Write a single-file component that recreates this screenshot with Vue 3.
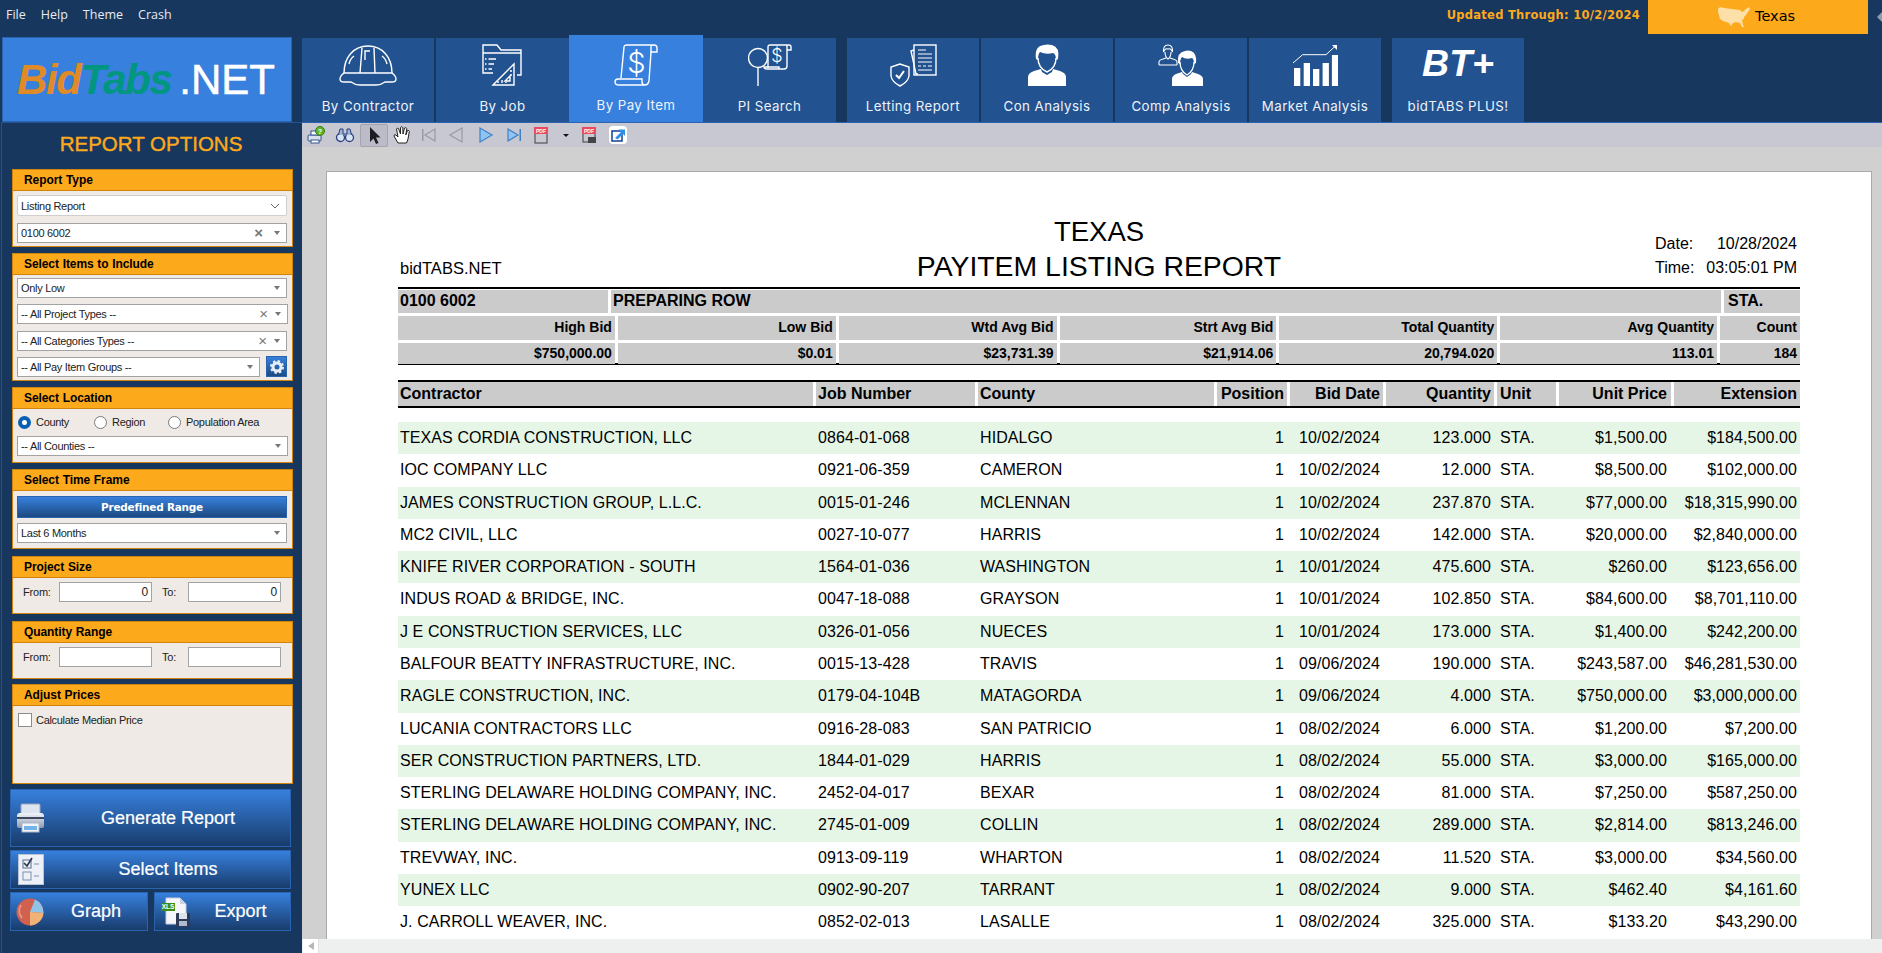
<script setup>
const tabsA = [
  { k: 'hat', label: 'By Contractor', w: 132 },
  { k: 'job', label: 'By Job', w: 133 },
  { k: 'pay', label: 'By Pay Item', w: 134, active: true },
  { k: 'pi', label: 'PI Search', w: 133 },
]
const tabsB = [
  { k: 'let', label: 'Letting Report', w: 132 },
  { k: 'con', label: 'Con Analysis', w: 132 },
  { k: 'comp', label: 'Comp Analysis', w: 132 },
  { k: 'mkt', label: 'Market Analysis', w: 132 },
]
const tools = [
  ['pq', 28], ['bin', 30], ['arrow', 28], ['hand', 28], ['first', 26], ['prev', 28],
  ['next', 32], ['last', 24], ['pdf', 30], ['drop', 20], ['mail', 26], ['exp', 32],
].map(([k, w]) => ({ k, w }))
const stats = [
  ['High Bid', '$750,000.00', 217], ['Low Bid', '$0.01', 218], ['Wtd Avg Bid', '$23,731.39', 218],
  ['Strt Avg Bid', '$21,914.06', 217], ['Total Quantity', '20,794.020', 218], ['Avg Quantity', '113.01', 217], ['Count', '184', 80],
]
const rows = [
  ['TEXAS CORDIA CONSTRUCTION, LLC', '0864-01-068', 'HIDALGO', '10/02/2024', '123.000', '$1,500.00', '$184,500.00'],
  ['IOC COMPANY LLC', '0921-06-359', 'CAMERON', '10/02/2024', '12.000', '$8,500.00', '$102,000.00'],
  ['JAMES CONSTRUCTION GROUP, L.L.C.', '0015-01-246', 'MCLENNAN', '10/02/2024', '237.870', '$77,000.00', '$18,315,990.00'],
  ['MC2 CIVIL, LLC', '0027-10-077', 'HARRIS', '10/02/2024', '142.000', '$20,000.00', '$2,840,000.00'],
  ['KNIFE RIVER CORPORATION - SOUTH', '1564-01-036', 'WASHINGTON', '10/01/2024', '475.600', '$260.00', '$123,656.00'],
  ['INDUS ROAD & BRIDGE, INC.', '0047-18-088', 'GRAYSON', '10/01/2024', '102.850', '$84,600.00', '$8,701,110.00'],
  ['J E CONSTRUCTION SERVICES, LLC', '0326-01-056', 'NUECES', '10/01/2024', '173.000', '$1,400.00', '$242,200.00'],
  ['BALFOUR BEATTY INFRASTRUCTURE, INC.', '0015-13-428', 'TRAVIS', '09/06/2024', '190.000', '$243,587.00', '$46,281,530.00'],
  ['RAGLE CONSTRUCTION, INC.', '0179-04-104B', 'MATAGORDA', '09/06/2024', '4.000', '$750,000.00', '$3,000,000.00'],
  ['LUCANIA CONTRACTORS LLC', '0916-28-083', 'SAN PATRICIO', '08/02/2024', '6.000', '$1,200.00', '$7,200.00'],
  ['SER CONSTRUCTION PARTNERS, LTD.', '1844-01-029', 'HARRIS', '08/02/2024', '55.000', '$3,000.00', '$165,000.00'],
  ['STERLING DELAWARE HOLDING COMPANY, INC.', '2452-04-017', 'BEXAR', '08/02/2024', '81.000', '$7,250.00', '$587,250.00'],
  ['STERLING DELAWARE HOLDING COMPANY, INC.', '2745-01-009', 'COLLIN', '08/02/2024', '289.000', '$2,814.00', '$813,246.00'],
  ['TREVWAY, INC.', '0913-09-119', 'WHARTON', '08/02/2024', '11.520', '$3,000.00', '$34,560.00'],
  ['YUNEX LLC', '0902-90-207', 'TARRANT', '08/02/2024', '9.000', '$462.40', '$4,161.60'],
  ['J. CARROLL WEAVER, INC.', '0852-02-013', 'LASALLE', '08/02/2024', '325.000', '$133.20', '$43,290.00'],
]
</script>

<template>
  <div class="app">
    <header class="topbar">
      <nav class="menu"><span>File</span><span>Help</span><span>Theme</span><span>Crash</span></nav>
      <div class="updated">Updated Through: 10/2/2024</div>
      <div class="state">
        <svg width="34" height="22" viewBox="0 0 34 22"><path fill="#fddfa8" d="M1 3 C2 1 5 1 7 2 L15 3 L23 4 L25 6 L27 5 L29 3 L32 1 L33 3 L31 6 L29 9 L27 11 L27 13 L25 14 L26 19 L27 21 L25 21 L23 17 L19 16 L16 17 L14 20 L12 17 L9 16 L6 15 L3 13 L2 9 L1 6 Z" /></svg>
        <span>Texas</span>
      </div>
      <svg class="peek" width="5" height="10" viewBox="0 0 5 10"><path d="M5 0 V10 L0 5 Z" fill="#8d9bb0" /></svg>
    </header>

    <div class="main">
      <aside class="left">
        <div class="logo"><span class="l-bid">Bid</span><span class="l-tabs">Tabs</span><span class="l-net">.NET</span></div>
        <div class="side">
          <h2>REPORT OPTIONS</h2>

          <section class="panel h78">
            <h3>Report Type</h3>
            <div class="body">
              <div class="ctl flat"><span>Listing Report</span><svg class="chev" width="10" height="6" viewBox="0 0 10 6"><path d="M1 1 L5 5 L9 1" fill="none" stroke="#666" /></svg></div>
              <div class="ctl m7"><span>0100 6002</span><b class="x dark">×</b><i class="caret"></i></div>
            </div>
          </section>

          <section class="panel h128">
            <h3>Select Items to Include</h3>
            <div class="body">
              <div class="ctl m3"><span>Only Low</span><i class="caret"></i></div>
              <div class="ctl m6 wide"><span>-- All Project Types --</span><b class="x near">×</b><i class="caret"></i></div>
              <div class="ctl m7"><span>-- All Categories Types --</span><b class="x near">×</b><i class="caret"></i></div>
              <div class="split">
                <div class="ctl grow"><span>-- All Pay Item Groups --</span><i class="caret"></i></div>
                <div class="gear">
                  <svg width="14" height="14" viewBox="0 0 14 14"><circle cx="7" cy="7" r="4" fill="none" stroke="#e8eef8" stroke-width="3" /><circle cx="7" cy="7" r="6" fill="none" stroke="#e8eef8" stroke-width="2" stroke-dasharray="2.4 2.3" /></svg>
                </div>
              </div>
            </div>
          </section>

          <section class="panel h76">
            <h3>Select Location</h3>
            <div class="body">
              <div class="radios">
                <label class="r1"><i class="radio on"></i>County</label>
                <label class="r2"><i class="radio"></i>Region</label>
                <label><i class="radio"></i>Population Area</label>
              </div>
              <div class="ctl m4 wide"><span>-- All Counties --</span><i class="caret"></i></div>
            </div>
          </section>

          <section class="panel h80">
            <h3>Select Time Frame</h3>
            <div class="body">
              <div class="range">Predefined Range</div>
              <div class="ctl m5"><span>Last 6 Months</span><i class="caret"></i></div>
            </div>
          </section>

          <section class="panel h58">
            <h3>Project Size</h3>
            <div class="from"><span class="lb1">From:</span><div class="num">0</div><span class="lb2">To:</span><div class="num">0</div></div>
          </section>

          <section class="panel h58 last5">
            <h3>Quantity Range</h3>
            <div class="from"><span class="lb1">From:</span><div class="num"></div><span class="lb2">To:</span><div class="num"></div></div>
          </section>

          <section class="panel h100 last5">
            <h3>Adjust Prices</h3>
            <div class="body"><label class="check"><i class="box"></i>Calculate Median Price</label></div>
          </section>

          <div class="btn big">
            <div class="bi w35">
              <svg width="31" height="30" viewBox="0 0 31 30">
                <defs><linearGradient id="pg" x1="0" y1="0" x2="0" y2="1"><stop offset="0" stop-color="#f2f5fa" /><stop offset="1" stop-color="#8d99ad" /></linearGradient></defs>
                <rect x="6" y="1" width="19" height="12" rx="1" fill="#dfe5f0" stroke="#9aa6ba" />
                <path d="M2 13 Q2 10 5 10 H26 Q29 10 29 13 V23 Q29 25 27 25 H4 Q2 25 2 23 Z" fill="url(#pg)" />
                <rect x="2" y="14" width="27" height="2" fill="#3d4a60" />
                <rect x="7" y="20" width="17" height="9" fill="#f2f6fc" stroke="#aab6c9" />
                <rect x="9" y="23" width="13" height="4" fill="#74b3e8" />
              </svg>
            </div>
            <span>Generate Report</span>
          </div>
          <div class="btn mid">
            <div class="bi w35">
              <svg width="26" height="31" viewBox="0 0 26 31">
                <rect x="0.5" y="0.5" width="25" height="30" fill="#edf1f7" stroke="#b8c4d6" />
                <rect x="5" y="6" width="8" height="8" fill="none" stroke="#5a6d92" />
                <path d="M6 9 L9 12 L14 4" fill="none" stroke="#28344c" stroke-width="1.6" />
                <rect x="5" y="18" width="8" height="8" fill="none" stroke="#7d8fae" />
                <path d="M16 10 H21 M16 22 H21" stroke="#7d8fae" />
              </svg>
            </div>
            <span>Select Items</span>
          </div>
          <div class="btn-row">
            <div class="btn small graph">
              <div class="bi w34">
                <svg width="28" height="28" viewBox="0 0 28 28">
                  <circle cx="14" cy="14" r="13.5" fill="#d0614f" />
                  <path d="M14 14 L19 1.5 A13.5 13.5 0 0 1 27.4 15 Z" fill="#8fc3e8" />
                  <path d="M14 14 L27.4 15 A13.5 13.5 0 0 1 14 27.5 Z" fill="#f1b277" />
                  <path d="M5 7 A11 11 0 0 0 6 20" fill="none" stroke="#e89485" stroke-width="2" />
                </svg>
              </div>
              <span>Graph</span>
            </div>
            <div class="btn small export">
              <div class="bi w36">
                <svg width="30" height="30" viewBox="0 0 30 30">
                  <path d="M5 1 H19 L25 7 V27 H5 Z" fill="#f4f6fa" stroke="#c3ccdb" />
                  <path d="M19 1 V7 H25 Z" fill="#c9d2e0" />
                  <rect x="0" y="6" width="14" height="8" fill="#3b8c14" />
                  <text x="7" y="12.3" text-anchor="middle" class="xls">XLS</text>
                  <rect x="15" y="16" width="14" height="14" rx="1" fill="#2d3b57" />
                  <rect x="18" y="16" width="8" height="6" fill="#dbe3ef" />
                  <rect x="18" y="24" width="8" height="5" fill="#aebbd0" />
                </svg>
              </div>
              <span>Export</span>
            </div>
          </div>
        </div>
      </aside>

      <div class="right">
        <div class="tabs">
          <div v-for="t in tabsA" :key="t.k" class="tab" :class="{ active: t.active }" :style="{ width: t.w + 'px' }">
            <div class="ticon">
              <svg v-if="t.k === 'hat'" width="58" height="42" viewBox="0 0 58 42" class="ln">
                <path d="M5 29 C5 13 15 2 29 2 C43 2 53 13 53 29" />
                <path d="M5 29 H53 Q57 32 57 35 Q57 38 53 38 H46 Q42 41 37 41 H21 Q16 41 12 38 H5 Q1 38 1 35 Q1 32 5 29 Z" />
                <path d="M21 29 L23 4 M36 29 L35 4 M26 16 V7 H31" />
                <path d="M10 20 Q11 15 15 12 M48 20 Q47 15 43 12" />
              </svg>
              <svg v-else-if="t.k === 'job'" width="41" height="42" viewBox="0 0 41 42" class="ln">
                <path d="M1 20 V1 H15 L19 6 H39 V31 H35" />
                <path d="M1 9 H39 M1 20 V29 H11" />
                <path d="M3 15 H14 M3 20 H12 M3 25 H10" stroke-dasharray="1.5 2 8 0" />
                <path d="M11 41 L32 20 V41 Z M23 37 L28 32 V37 Z" />
                <path d="M16 39 V37 M20 39 V36 M24 39 V38 M30 27 H28 M30 31 H28" />
              </svg>
              <svg v-else-if="t.k === 'pay'" width="44" height="42" viewBox="0 0 44 42" class="ln">
                <path d="M7 34 L10 3 Q10 1 13 1 H40 Q43 1 43 4 V8 H37 V3 Q37 1 40 1" />
                <path d="M37 8 L35 37 Q34 41 31 41 H5 Q1 41 1 38 Q1 35 4 35 H28 V38 Q28 41 31 41" />
                <text x="22.5" y="29" text-anchor="middle" class="dollar">$</text>
                <path d="M22.5 5 V9 M22.5 28 V33" />
              </svg>
              <svg v-else width="44" height="42" viewBox="0 0 44 42" class="ln">
                <circle cx="10" cy="14" r="9.5" />
                <path d="M10 24 V42" />
                <path d="M20 24 V3 Q20 1 22 1 H41 Q43 1 43 3 V6 H39 M39 1 V22 Q39 25 36 25 H19 Q16 25 16 23 H31 V25" />
                <text x="29" y="18" text-anchor="middle" class="dollar2">$</text>
              </svg>
            </div>
            <div class="tlabel">{{ t.label }}</div>
          </div>
          <div class="tabgap"></div>
          <div v-for="t in tabsB" :key="t.k" class="tab" :style="{ width: t.w + 'px' }">
            <div class="ticon">
              <svg v-if="t.k === 'let'" width="47" height="43" viewBox="0 0 47 43" class="ln">
                <path d="M10 20 L1 23 V32 Q2 38 10 42 Q18 38 19 32 V23 Z" />
                <path d="M6 31 L9 34 L14 27" stroke-width="2" />
                <path d="M24 6 L21 7 L26 30 H28" />
                <rect x="24" y="1" width="22" height="30" />
                <path d="M28 6 H36 M28 10 H42 M28 14 H42 M28 18 H42 M28 22 H31 M33 22 H36 M38 22 H42 M28 26 H42" stroke-width="1.1" />
              </svg>
              <svg v-else-if="t.k === 'con'" width="38" height="42" viewBox="0 0 38 42">
                <path class="fill" d="M0 42 V33 Q0 29 6 27 L13 25 L14 28 L19 31 L24 28 L25 25 L32 27 Q38 29 38 33 V42 Z" />
                <path d="M10 14 Q10 24 19 28 Q28 24 28 14" fill="none" stroke="#fff" stroke-width="1.4" />
                <path class="fill" d="M8 15 Q6 2 16 1 Q19 0 24 1 Q32 3 30 15 L28 16 Q28 10 25 9 Q18 11 12 8 Q10 10 10 16 Z" />
              </svg>
              <svg v-else-if="t.k === 'comp'" width="46" height="42" viewBox="0 0 46 42">
                <path d="M1 21 V18 Q1 16 5 15 L8 14 M19 21 V18 Q19 16 15 15 L12 14 M1 21 H19 M7 8 Q7 13 10 15 Q13 13 13 8 M5.500 8 Q5 1 10 1 Q15 1 14.500 8 Q13 4 10 5 Q7 4 5.500 8 Z" fill="none" stroke="#fff" stroke-width="1.1" />
                <path class="fill" d="M14 42 V35 Q14 32 18 30 L24 28 L25 30 L29 33 L33 30 L34 28 L40 30 Q45 32 45 35 V42 Z" />
                <path d="M22 18 Q22 27 29 31 Q36 27 36 18" fill="none" stroke="#fff" stroke-width="1.3" />
                <path class="fill" d="M20 19 Q19 8 27 7 Q30 6 33 7 Q39 9 38 19 L36 20 Q36 15 34 14 Q28 16 24 13 Q22 15 22 20 Z" />
              </svg>
              <svg v-else width="45" height="42" viewBox="0 0 45 42">
                <g class="fill"><rect x="1" y="24" width="6.300" height="18" /><rect x="10.700" y="19" width="6.300" height="23" /><rect x="20" y="25" width="6.300" height="17" /><rect x="29.600" y="19" width="6.300" height="23" /><rect x="38.900" y="11" width="6.300" height="31" /></g>
                <path d="M0 19 L9.600 10.700 H33 L43 1.500" fill="none" stroke="#fff" stroke-width="1" />
                <path d="M39 1 H44 V6 Z" fill="#fff" />
              </svg>
            </div>
            <div class="tlabel">{{ t.label }}</div>
          </div>
          <div class="tabgap2"></div>
          <div class="tab plus">
            <div class="ticon"><span class="bt">BT+</span></div>
            <div class="tlabel">bidTABS PLUS!</div>
          </div>
        </div>

        <div class="toolbar">
          <div v-for="t in tools" :key="t.k" class="tool" :class="{ sel: t.k === 'arrow' }" :style="{ width: t.w + 'px' }">
            <svg width="20" height="20" viewBox="0 0 20 20">
              <template v-if="t.k === 'pq'">
                <rect x="2" y="10" width="13" height="6" rx="1" fill="#d9e0ee" stroke="#34558e" />
                <rect x="5" y="15" width="8" height="3" fill="#fff" stroke="#34558e" />
                <rect x="5" y="6" width="7" height="4" fill="#fff" stroke="#34558e" />
                <circle cx="14" cy="6" r="4.500" fill="#5cb428" stroke="#3a7c14" />
                <text x="14" y="8.500" text-anchor="middle" class="q">?</text>
              </template>
              <template v-else-if="t.k === 'bin'">
                <circle cx="5.500" cy="12.500" r="4" fill="#d6e4f6" stroke="#2b3f7a" stroke-width="1.300" />
                <circle cx="14.500" cy="12.500" r="4" fill="#d6e4f6" stroke="#2b3f7a" stroke-width="1.300" />
                <path d="M3.500 10 L5 4 H8 V9 H12 V4 H15 L16.500 10" fill="#9eb3d6" stroke="#2b3f7a" />
              </template>
              <path v-else-if="t.k === 'arrow'" d="M6 2 V17 L9.500 13.500 L12 19 L14.500 18 L12 12.500 H16.500 Z" fill="#1c1c22" />
              <path v-else-if="t.k === 'hand'" d="M6 18 L2 11 Q2 9 4 10 L6 12 L4.500 4 Q5 2.500 6.500 3.500 L8.500 9 L8.500 2.500 Q9.500 1 10.800 2.500 L11 9 L12.500 3 Q14 2 14.800 3.500 L13.800 10 L15.500 5.500 Q17 5 17.300 6.500 L16 14 L14.500 18 Z" fill="#fff" stroke="#222" stroke-width="1" />
              <template v-else-if="t.k === 'first'">
                <path d="M16 4 L6 10 L16 16 Z" fill="#c8c8d3" stroke="#9a9aa2" stroke-width="1.200" />
                <rect x="3" y="4" width="1.500" height="12" fill="#9a9aa2" />
              </template>
              <path v-else-if="t.k === 'prev'" d="M16 3 L4 10 L16 17 Z" fill="#c8c8d3" stroke="#9a9aa2" stroke-width="1.200" />
              <path v-else-if="t.k === 'next'" d="M4 3 L16 10 L4 17 Z" fill="#8fc4f0" stroke="#3f80c9" stroke-width="1.200" />
              <template v-else-if="t.k === 'last'">
                <path d="M4 4 L14 10 L4 16 Z" fill="#8fc4f0" stroke="#3f80c9" stroke-width="1.200" />
                <rect x="15.500" y="4" width="1.500" height="12" fill="#3f80c9" />
              </template>
              <template v-else-if="t.k === 'pdf'">
                <rect x="4" y="7" width="12" height="11" fill="none" stroke="#555" stroke-width="1.200" />
                <rect x="3" y="2" width="14" height="7" fill="#ea4a60" />
                <text x="10" y="7.500" text-anchor="middle" class="p">PDF</text>
              </template>
              <path v-else-if="t.k === 'drop'" d="M7 9 H13 L10 12 Z" fill="#111" />
              <template v-else-if="t.k === 'mail'">
                <rect x="4" y="7" width="12" height="10" fill="none" stroke="#555" stroke-width="1.200" />
                <rect x="3" y="2" width="14" height="7" fill="#ea4a60" />
                <text x="10" y="7.500" text-anchor="middle" class="p">PDF</text>
                <rect x="9" y="12" width="8" height="6" fill="#444" />
              </template>
              <template v-else>
                <rect x="1" y="1" width="18" height="18" rx="4" fill="#fff" />
                <rect x="4" y="6" width="10" height="10" fill="#fff" stroke="#1d4e9a" stroke-width="1.600" />
                <path d="M7 13 L13 7 L10.500 4.500 H17 V11 L15 9 L9.500 14.500 Z" fill="#2f8fe8" />
              </template>
            </svg>
          </div>
        </div>

        <div class="viewer">
          <article class="page">
            <div class="rhead">
              <div class="brand">bidTABS.NET</div>
              <div class="title"><div class="t1">TEXAS</div><div class="t2">PAYITEM LISTING REPORT</div></div>
              <div class="dt">
                <div><span>Date:</span><span>10/28/2024</span></div>
                <div><span>Time:</span><span>03:05:01 PM</span></div>
              </div>
            </div>

            <div class="summary">
              <div class="s1">
                <div class="c a">0100 6002</div><div class="c b">PREPARING ROW</div><div class="c d">STA.</div>
              </div>
              <div class="s2"><div v-for="s in stats" :key="s[0]" class="c" :style="{ width: s[2] + 'px' }">{{ s[0] }}</div></div>
              <div class="s3"><div v-for="s in stats" :key="s[0]" class="c" :style="{ width: s[2] + 'px' }">{{ s[1] }}</div></div>
            </div>

            <div class="thead g">
              <div class="l">Contractor</div><div class="l">Job Number</div><div class="l">County</div>
              <div class="r">Position</div><div class="r dr">Bid Date</div><div class="r">Quantity</div>
              <div class="l u">Unit</div><div class="r up">Unit Price</div><div class="r">Extension</div>
            </div>

            <div class="rows">
              <div v-for="(r, i) in rows" :key="i" class="row g" :class="{ green: i % 2 === 0 }">
                <div class="l">{{ r[0] }}</div><div class="l">{{ r[1] }}</div><div class="l">{{ r[2] }}</div>
                <div class="r">1</div><div class="r dr">{{ r[3] }}</div><div class="r">{{ r[4] }}</div>
                <div class="l u">STA.</div><div class="r up">{{ r[5] }}</div><div class="r">{{ r[6] }}</div>
              </div>
            </div>
          </article>
        </div>
        <div class="hscroll">
          <div class="sbtn"><svg width="6" height="8" viewBox="0 0 6 8"><path d="M6 0 V8 L0 4 Z" fill="#b5b8bb" /></svg></div>
        </div>
      </div>
    </div>
  </div>
</template>

<style>
html, body { margin: 0; background: #17375e; overflow: hidden; }
</style>

<style scoped>
.app { width: 1882px; height: 953px; background: #17375e; overflow: hidden; font-family: "Liberation Sans", Arial, sans-serif; display: flex; flex-direction: column; }

.topbar { height: 34px; display: flex; align-items: flex-start; flex: none; margin-bottom: 1px; }
.menu { display: flex; flex: 1; font: 12.5px/30px "Open Sans", sans-serif; color: #e8ebf0; padding-left: 6px; }
.menu span { margin-right: 15px; }
.updated { font: bold 11.5px/31px "DejaVu Sans", sans-serif; color: #fda91c; margin-right: 8px; letter-spacing: 0.27px; }
.state { width: 220px; height: 34px; background: #fda91c; display: flex; align-items: center; padding: 0 0 3px 69px; box-sizing: border-box; font: 14.500px "DejaVu Sans", sans-serif; color: #000; }
.state svg { margin-right: 4px; margin-top: 3px; }
.peek { margin: 12px 0 0 9px; }

.main { flex: 1; display: flex; min-height: 0; }
.left { width: 302px; flex: none; display: flex; flex-direction: column; }
.logo { margin: 2px 0 0 2px; width: 290px; height: 85px; box-sizing: border-box; background: #3780dd; border: 1px solid #2a64b0; display: flex; align-items: center; padding-left: 14px; font-size: 42px; white-space: nowrap; }
.l-bid { color: #e08a28; font-style: italic; font-weight: 700; letter-spacing: -1.400px; }
.l-tabs { color: #00967f; font-style: italic; font-weight: 700; letter-spacing: -1.400px; }
.l-net { color: #fff; margin-left: 8px; -webkit-text-stroke: 0.5px #fff; }

.side { flex: 1; margin-left: 1px; border-left: 1px solid #22528f; border-top: 1px solid #22528f; padding-left: 10px; }
.side h2 { margin: 0 0 4px; width: 278px; text-align: center; font: 400 20.500px/42px "Liberation Sans", sans-serif; color: #fda91c; -webkit-text-stroke: 0.4px #fda91c; }

.panel { width: 281px; box-sizing: border-box; border: 1px solid #d1840d; background: #efeae5; margin-bottom: 6px; }
.panel h3 { margin: 0; height: 21px; box-sizing: border-box; background: #fda91c; border-bottom: 1px solid #d1840d; font: bold 12px/20px "Liberation Sans", sans-serif; color: #000; padding-left: 11px; word-spacing: 0.5px; letter-spacing: -0.08px; }
.h78 { height: 78px; } .h128 { height: 128px; } .h76 { height: 76px; } .h80 { height: 80px; margin-bottom: 7px; } .h58 { height: 58px; margin-bottom: 7px; } .h100 { height: 100px; }
.last5 { margin-bottom: 5px; }
.body { padding: 4px 5px 0 4px; font: 11px "Liberation Sans", sans-serif; letter-spacing: -0.3px; color: #222; }

.ctl { height: 20px; box-sizing: border-box; background: #fff; border: 1px solid #a3a3a3; display: flex; align-items: center; padding: 0 6px 0 3px; }
.ctl span { flex: 1; white-space: nowrap; }
.flat { height: 21px; border-color: #cfcfcf; border-radius: 2px; }
.m3 { margin-top: -1px; } .m4 { margin-top: 4px; } .m5 { margin-top: 5px; } .m6 { margin-top: 6px; } .m7 { margin-top: 7px; }
.wide { margin-right: -1px; }
.caret { width: 0; height: 0; border: 3px solid transparent; border-top: 4px solid #777; border-bottom: 0; }
.x { font: 400 15px/14px "Liberation Sans", sans-serif; color: #777; margin-right: 11px; letter-spacing: 0; }
.x.dark { font-weight: 700; }
.x.near { margin-right: 7px; }
.chev { flex: none; }
.split { display: flex; align-items: center; margin-top: 5px; }
.grow { flex: 1; height: 20px; }
.gear { width: 21px; height: 21px; margin-left: 6px; display: flex; align-items: center; justify-content: center; background: linear-gradient(#3780dd, #1c4a80); border: 1px solid #2a64b0; box-sizing: border-box; }

.radios { display: flex; align-items: center; height: 20px; margin-top: -1px; }
.radios label { display: flex; align-items: center; }
.r1 { width: 76px; } .r2 { width: 74px; }
.radio { width: 13px; height: 13px; border-radius: 50%; box-sizing: border-box; border: 1px solid #7a7a7a; background: #fff; margin: 0 5px 0 1px; }
.radio.on { border: 4px solid #0a5fb4; }

.range { height: 22px; margin-top: 1px; background: linear-gradient(#3780dd, #1c4a80); border: 1px solid #2a64b0; box-sizing: border-box; color: #fff; text-align: center; font: bold 10.500px/20px "DejaVu Sans", sans-serif; letter-spacing: -0.25px; }

.from { display: flex; align-items: center; padding: 4px 0 0 10px; font: 11px "Liberation Sans", sans-serif; letter-spacing: -0.2px; color: #222; }
.lb1 { width: 36px; } .lb2 { width: 26px; margin-left: 10px; }
.num { width: 93px; height: 20px; box-sizing: border-box; background: #fff; border: 1px solid #a3a3a3; text-align: right; padding-right: 3px; line-height: 18px; font-size: 12px; }

.check { display: flex; align-items: center; margin-top: 3px; }
.box { width: 14px; height: 14px; box-sizing: border-box; background: #fff; border: 1px solid #8c8c8c; margin: 0 4px 0 1px; }

.btn { display: flex; align-items: center; box-sizing: border-box; background: linear-gradient(#3780dd, #183c6c); border: 1px solid #2a64b0; color: #fff; font: 18px "Liberation Sans", sans-serif; -webkit-text-stroke: 0.2px #fff; }
.btn > span { flex: 1; text-align: center; white-space: nowrap; }
.big { width: 281px; height: 58px; margin: 0 0 3px -2px; }
.mid { width: 281px; height: 39px; margin: 0 0 3px -2px; }
.btn-row { display: flex; width: 281px; margin-left: -2px; justify-content: space-between; }
.graph { width: 138px; height: 39px; } .export { width: 137px; height: 39px; }
.bi { flex: none; display: flex; align-items: center; justify-content: center; }
.w35 { width: 35px; padding-left: 4px; box-sizing: border-box; margin-right: 0; overflow: visible; }
.w34 { width: 34px; padding-left: 3px; box-sizing: border-box; }
.w36 { width: 36px; padding-left: 5px; box-sizing: border-box; }
.xls { font: bold 6.500px "Liberation Sans", sans-serif; fill: #fff; stroke: none; }

.right { flex: 1; min-width: 0; display: flex; flex-direction: column; }
.tabs { height: 88px; box-sizing: border-box; flex: none; display: flex; align-items: flex-end; border-bottom: 1px solid #2a64b0; column-gap: 2px; }
.tab { height: 84px; flex: none; background: #22528f; color: #eef3fa; display: flex; flex-direction: column; align-items: center; }
.tab.active { height: 87px; background: #3780dd; margin: 0 -2px; z-index: 1; }
.tabgap { width: 7px; }
.tabgap2 { width: 7px; }
.ticon { height: 49px; padding-top: 6px; box-sizing: border-box; display: flex; align-items: flex-start; justify-content: center; }
.active .ticon { height: 51px; padding-top: 9px; }
.tlabel { font: 400 13.300px/18px "Inter", sans-serif; margin-top: 10px; letter-spacing: 0.42px; white-space: nowrap; }
.active .tlabel { margin-top: 10px; }
.plus { width: 132px; }
.plus .ticon { padding-top: 9px; }
.bt { font: italic bold 37.500px/32px "Liberation Sans", sans-serif; color: #fff; }
.ln { fill: none; stroke: #fff; stroke-width: 1.400; }
.ln text { fill: #fff; stroke: none; }
.fill { fill: #fff; }
.dollar { font: 300 29px "Inter", sans-serif; }
.dollar2 { font: 300 18px "Inter", sans-serif; }

.toolbar { height: 24px; flex: none; background: #c8c8d3; display: flex; align-items: center; }
.tool { height: 24px; box-sizing: border-box; display: flex; align-items: center; justify-content: center; flex: none; }
.tool.sel { background: #bcbcc8; border: 1px solid #a4a4b0; border-radius: 2px; height: 23px; }
.q { font: bold 7px "Liberation Sans", sans-serif; fill: #fff; }
.p { font: bold 5px "Liberation Sans", sans-serif; fill: #fff; }

.viewer { flex: 1; min-height: 0; background: #d0d0d0; overflow: hidden; padding: 24px 10px 0 24px; }
.page { height: 100%; background: #fff; border: 1px solid #aaa; border-bottom: 0; box-sizing: border-box; padding: 42px 71px 0; overflow: hidden; color: #000; width: 1546px; }
.rhead { display: grid; grid-template-columns: 1fr auto 1fr; height: 73px; font-size: 16px; }
.brand { margin-top: 44px; line-height: 20px; padding-left: 2px; font-size: 16.500px; }
.title { text-align: center; line-height: 35px; color: #000; }
.t1 { font-size: 27.500px; }
.t2 { font-size: 28.400px; white-space: nowrap; }
.dt { margin-top: 18px; line-height: 24px; justify-self: end; width: 142px; padding-right: 3px; }
.dt div { display: flex; justify-content: space-between; }

.summary { border-top: 2px solid #000; border-bottom: 2px solid #000; padding-top: 1px; height: 78px; box-sizing: border-box; }
.c { background: #cbcbcb; box-sizing: border-box; white-space: nowrap; }
.s1, .s2, .s3 { display: flex; column-gap: 3px; }
.s1 { height: 23px; font: bold 16px/21px "Liberation Sans", sans-serif; }
.s1 .a { width: 210px; padding-left: 2px; } .s1 .b { width: 1110px; padding-left: 2px; } .s1 .d { width: 76px; padding-left: 4px; }
.s2 { height: 24px; margin-top: 3px; font: bold 14px/22px "Liberation Sans", sans-serif; text-align: right; }
.s3 { height: 21px; margin-top: 3px; font: bold 14px/21px "Liberation Sans", sans-serif; text-align: right; }
.s2 .c, .s3 .c { padding-right: 3px; }

.g { display: grid; grid-template-columns: 415px 159px 236px 70px 93px 108px 59px 112px 126px; column-gap: 3px; }
.g > div { white-space: nowrap; box-sizing: border-box; }
.l { padding-left: 2px; } .r { text-align: right; padding-right: 3px; } .dr { padding-right: 3px; } .u { padding-left: 3px; } .up { padding-right: 4px; }
.thead { margin-top: 15px; border-top: 2px solid #000; border-bottom: 2px solid #000; font: bold 16px/24px "Liberation Sans", sans-serif; height: 28px; box-sizing: border-box; }
.thead > div { background: #cbcbcb; height: 24px; }
.rows { margin-top: 14px; }
.row { height: 32.290px; font-size: 16px; line-height: 32px; letter-spacing: 0.08px; }
.green { background: #e6f6e6; }

.hscroll { height: 14px; flex: none; background: #eef0f0; display: flex; }
.sbtn { width: 15px; margin-left: 1px; background: #fff; border-right: 1px solid #dfe1e1; display: flex; align-items: center; justify-content: center; }
</style>
